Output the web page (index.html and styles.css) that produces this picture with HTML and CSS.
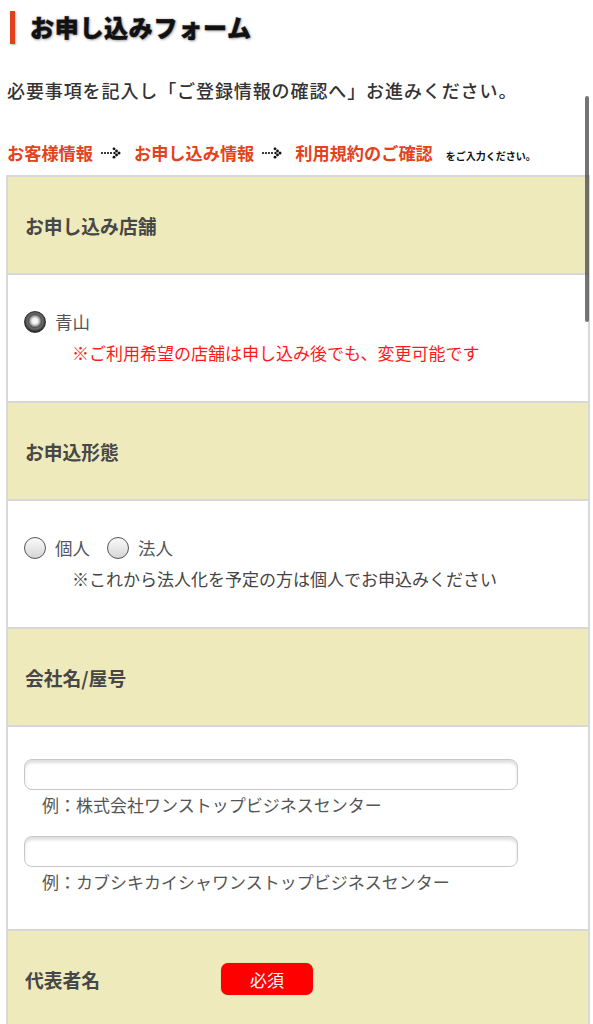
FILE: index.html
```html
<!DOCTYPE html>
<html lang="ja">
<head>
<meta charset="utf-8">
<title>お申し込みフォーム</title>
<link rel="stylesheet" href="styles.css">
</head>
<body>
<div class="page">
  <h1 class="title"><span class="title-bar"></span><span class="title-text">お申し込みフォーム</span></h1>
  <p class="intro">必要事項を記入し「ご登録情報の確認へ」お進みください。</p>
  <div class="steps">
    <span class="step">お客様情報</span>
    <svg class="arrow" width="26" height="12" viewBox="0 0 26 12"><circle cx="2" cy="6" r="1.1"/><circle cx="5" cy="6" r="1.1"/><circle cx="8" cy="6" r="1.1"/><circle cx="11" cy="6" r="1.1"/><circle cx="14" cy="1.8" r="1.4"/><circle cx="16.5" cy="4" r="1.4"/><circle cx="19" cy="6" r="1.5"/><circle cx="16.5" cy="8" r="1.4"/><circle cx="14" cy="10.2" r="1.4"/><circle cx="14.5" cy="6" r="1.2"/></svg>
    <span class="step">お申し込み情報</span>
    <svg class="arrow" width="26" height="12" viewBox="0 0 26 12"><circle cx="2" cy="6" r="1.1"/><circle cx="5" cy="6" r="1.1"/><circle cx="8" cy="6" r="1.1"/><circle cx="11" cy="6" r="1.1"/><circle cx="14" cy="1.8" r="1.4"/><circle cx="16.5" cy="4" r="1.4"/><circle cx="19" cy="6" r="1.5"/><circle cx="16.5" cy="8" r="1.4"/><circle cx="14" cy="10.2" r="1.4"/><circle cx="14.5" cy="6" r="1.2"/></svg>
    <span class="step">利用規約のご確認</span>
    <span class="step-note">をご入力ください。</span>
  </div>

  <div class="form">
    <div class="row-head"><span class="head-label">お申し込み店舗</span></div>
    <div class="row-body">
      <div class="radios">
        <label class="radio-item"><span class="radio checked"></span><span class="radio-label">青山</span></label>
      </div>
      <p class="note note-red">※ご利用希望の店舗は申し込み後でも、変更可能です</p>
    </div>

    <div class="row-head"><span class="head-label">お申込形態</span></div>
    <div class="row-body">
      <div class="radios">
        <label class="radio-item"><span class="radio"></span><span class="radio-label">個人</span></label>
        <label class="radio-item"><span class="radio"></span><span class="radio-label">法人</span></label>
      </div>
      <p class="note">※これから法人化を予定の方は個人でお申込みください</p>
    </div>

    <div class="row-head"><span class="head-label">会社名/屋号</span></div>
    <div class="row-body row-inputs">
      <div class="text-input"></div>
      <p class="example">例：株式会社ワンストップビジネスセンター</p>
      <div class="text-input second"></div>
      <p class="example">例：カブシキカイシャワンストップビジネスセンター</p>
    </div>

    <div class="row-head"><span class="head-label">代表者名</span><span class="badge">必須</span></div>
  </div>

  <div class="scroll-thumb"></div>
</div>
</body>
</html>
```

FILE: styles.css
```css
* { box-sizing: border-box; }

html, body {
  margin: 0;
  padding: 0;
  background: #fff;
}

body {
  font-family: "Noto Sans CJK JP", "Noto Sans", sans-serif;
  color: #444;
}

.page {
  position: relative;
  width: 593px;
  height: 1024px;
  overflow: hidden;
  padding: 10px 0 0 6px;
}

.title {
  display: flex;
  align-items: center;
  height: 34px;
  margin: 0;
  padding-left: 4px;
}

.title-bar {
  width: 5px;
  height: 33px;
  background: #e0401a;
  box-shadow: 1px 1px 2px rgba(0,0,0,0.25);
}

.title-text {
  margin-left: 15px;
  font-size: 24px;
  font-weight: 900;
  color: #111;
  letter-spacing: 0.7px;
  line-height: 34px;
  -webkit-text-stroke: 0.4px #111;
  text-shadow: 1px 1px 3px rgba(0,0,0,0.35), 0 0 3px rgba(0,0,0,0.2);
}

.intro {
  margin: 33px 0 0 1px;
  font-size: 18px;
  line-height: 26px;
  font-weight: 500;
  letter-spacing: 0.9px;
  color: #333;
}

.steps {
  display: flex;
  align-items: center;
  margin: 38px 0 0 1px;
  height: 24px;
}

.step {
  font-size: 17.2px;
  font-weight: 700;
  color: #e2431d;
  line-height: 24px;
}

.arrow {
  fill: #111;
  margin: 0 8px 0 7px;
}

.step-note {
  margin-left: 13px;
  margin-top: 4px;
  font-size: 10px;
  font-weight: 700;
  color: #111;
}

.form {
  margin-top: 10px;
  width: 584px;
  border: 2px solid #d8d8d8;
  border-bottom: none;
}

.row-head {
  display: flex;
  align-items: center;
  height: 98px;
  padding: 0 17px;
  background: #eeeabb;
  border-bottom: 2px solid #d8d8d8;
}

.head-label {
  font-size: 18.8px;
  font-weight: 700;
  color: #474747;
  width: 196px;
}

.badge {
  display: inline-flex;
  align-items: center;
  justify-content: center;
  width: 92px;
  height: 32px;
  border-radius: 7px;
  background: #ff0000;
  color: #fff;
  font-size: 17px;
  box-shadow: 0 0 1px rgba(0,0,0,0.3);
}

.row-body {
  padding: 36px 16px 36px 16px;
  background: #fff;
  border-bottom: 2px solid #d8d8d8;
}

.radios {
  display: flex;
  align-items: center;
  height: 21px;
  gap: 17px;
}

.radio-item {
  display: flex;
  align-items: center;
  gap: 9px;
}

.radio {
  display: inline-block;
  width: 22px;
  height: 22px;
  border-radius: 50%;
  border: 1px solid #555;
  background: linear-gradient(#fafafa, #d6d6d6);
}

.radio.checked {
  border-color: #333;
  background: radial-gradient(circle at 50% 45%, #ffffff 0, #eeeeee 3px, #a0a0a0 5px, #555 6.5px, #6a6a6a 8px, #2c2c2c 10.5px);
}

.radio-label {
  font-size: 17.5px;
  color: #555;
  line-height: 21px;
}

.note {
  margin: 9px 0 0 48px;
  font-size: 17px;
  line-height: 24px;
  color: #444;
}

.note-red {
  color: #ff1a1a;
}

.row-inputs {
  padding: 32px 16px 35px 16px;
}

.text-input {
  width: 494px;
  height: 31px;
  border: 1px solid #c8c8c8;
  border-radius: 8px;
  background: #fff;
  box-shadow: inset 0 3px 3px rgba(0,0,0,0.13);
}

.text-input.second {
  margin-top: 19px;
}

.example {
  margin: 3px 0 0 18px;
  font-size: 17px;
  line-height: 24px;
  color: #555;
}

.scroll-thumb {
  position: absolute;
  left: 585px;
  top: 96px;
  width: 4px;
  height: 226px;
  border-radius: 2px;
  background: rgba(70, 70, 70, 0.75);
}
```
